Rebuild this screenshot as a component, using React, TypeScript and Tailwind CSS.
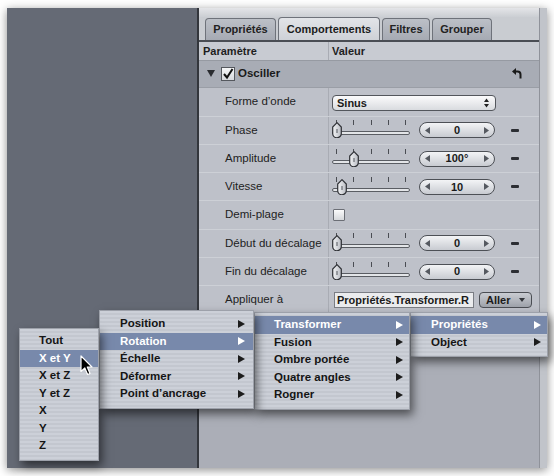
import React from "react";

type Item = { label: string; arrow?: boolean; active?: boolean };

function Tri({ white }: { white?: boolean }) {
  return (
    <svg width="7" height="8" viewBox="0 0 7 8">
      <path d="M0 0L7 4L0 8Z" fill={white ? "#ffffff" : "#1c1c1c"} />
    </svg>
  );
}

function Menu({ items, box, item }: { items: Item[]; box: string; item: string }) {
  return (
    <div
      className={`absolute ${box} pt-[3px] pb-[5px] border border-[#9da1aa] bg-[repeating-linear-gradient(180deg,#ccd0d8_0px,#ccd0d8_2px,#c3c7cf_2px,#c3c7cf_4px)] shadow-[3px_5px_9px_rgba(0,0,0,0.55)]`}
    >
      {items.map((it) => (
        <div
          key={it.label}
          className={`h-[17.5px] flex items-center justify-between text-[11.5px] font-bold ${item} ${
            it.active ? "bg-[#7889ab] text-white" : "text-[#151515]"
          }`}
        >
          <span>{it.label}</span>
          {it.arrow ? <Tri white={it.active} /> : null}
        </div>
      ))}
    </div>
  );
}

function Thumb() {
  return (
    <svg width="10" height="16" viewBox="0 0 10 16">
      <defs>
        <linearGradient id="tg" x1="0" x2="1" y1="0" y2="0">
          <stop offset="0" stopColor="#f4f5f7" />
          <stop offset="1" stopColor="#b9bcc3" />
        </linearGradient>
      </defs>
      <path d="M5 0.7 L9.3 5 V11.5 A4.3 4.3 0 0 1 0.7 11.5 V5 Z" fill="url(#tg)" stroke="#2e3035" strokeWidth="1.2" />
      <path d="M5 7 V11" stroke="#55585e" strokeWidth="1" />
    </svg>
  );
}

const ticks = [4, 21, 39, 56, 73];

function Slider({ pos }: { pos: number }) {
  return (
    <div className="relative w-[78px] h-[28px] shrink-0">
      {ticks.map((t) => (
        <div key={t} className="absolute top-[4px] w-[1px] h-[5px] bg-[#4a4d53]" style={{ left: t }} />
      ))}
      <div className="absolute left-0 right-0 top-[15px] h-[4px] rounded-full border border-[#5a5d63] bg-[#e3e5e8]" />
      <div className="absolute top-[6px]" style={{ left: pos - 5 }}>
        <Thumb />
      </div>
    </div>
  );
}

function Stepper({ value }: { value: string }) {
  return (
    <div className="ml-[9px] w-[76px] h-[16px] rounded-full border border-[#4d5056] bg-[linear-gradient(180deg,#f3f4f6,#c8cbd1)] flex items-center justify-between px-[5px] shrink-0">
      <svg width="5" height="7" viewBox="0 0 5 7">
        <path d="M5 0L0 3.5L5 7Z" fill="#555960" />
      </svg>
      <span className="text-[11px] font-bold text-[#1a1a1a]">{value}</span>
      <svg width="5" height="7" viewBox="0 0 5 7">
        <path d="M0 0L5 3.5L0 7Z" fill="#555960" />
      </svg>
    </div>
  );
}

function Minus() {
  return <div className="ml-[16px] w-[8px] h-[3px] rounded-[1px] bg-[#2c2e33] shrink-0" />;
}

function Row({ label, children }: { label: string; children?: React.ReactNode }) {
  return (
    <div className="h-[28.3px] flex border-b border-[#cdd0d6] bg-[#bec1c9]">
      <div className="w-[130px] shrink-0 pl-[26px] flex items-center text-[11.5px] text-[#222222] border-r border-[#a9acb4]">
        {label}
      </div>
      <div className="flex-1 pl-[3px] flex items-center">{children}</div>
    </div>
  );
}

function SliderRow({ label, pos, value }: { label: string; pos: number; value: string }) {
  return (
    <Row label={label}>
      <Slider pos={pos} />
      <Stepper value={value} />
      <Minus />
    </Row>
  );
}

export default function App() {
  return (
    <div className="relative w-[554px] h-[476px] bg-white overflow-hidden font-['Liberation_Sans',Arial,sans-serif]">
      <div className="ml-[7px] pt-[8px]">
        <div className="w-[540px] h-[460px] flex shadow-[0_2px_9px_rgba(0,0,0,0.45)]">
          <div className="w-[190px] bg-[#656a75]" />
          <div className="w-[2px] bg-[#33363c]" />
          <div className="w-[348px] flex bg-[#abaeb7]">
            <div className="w-[340px] flex flex-col">
              <div className="h-[9px] bg-[linear-gradient(180deg,#e4e5e8,#cbced3)]" />
              <div className="h-[23px] flex items-end pl-[6px] gap-[2px] bg-[#c9ccd1]">
                <div className="w-[71px] h-[22px] rounded-t-[4px] border border-b-0 border-[#6e727a] bg-[linear-gradient(180deg,#bcc0c7,#a6aab3)] flex items-center justify-center text-[11px] font-bold text-[#222]">
                  Propriétés
                </div>
                <div className="w-[102px] h-[23px] rounded-t-[4px] border border-b-0 border-[#6e727a] bg-[linear-gradient(180deg,#e2e4e8,#ced1d7)] flex items-center justify-center text-[11px] font-bold text-[#1c1c1c]">
                  Comportements
                </div>
                <div className="w-[48px] h-[22px] rounded-t-[4px] border border-b-0 border-[#6e727a] bg-[linear-gradient(180deg,#bcc0c7,#a6aab3)] flex items-center justify-center text-[11px] font-bold text-[#222]">
                  Filtres
                </div>
                <div className="w-[60px] h-[22px] rounded-t-[4px] border border-b-0 border-[#6e727a] bg-[linear-gradient(180deg,#bcc0c7,#a6aab3)] flex items-center justify-center text-[11px] font-bold text-[#222]">
                  Grouper
                </div>
              </div>
              <div className="h-[2px] bg-[#4a4d54]" />
              <div className="h-[18.7px] flex bg-[#c8cbd2] border-b border-[#969aa2] text-[11px] font-bold text-[#1e1e1e]">
                <div className="w-[130px] pl-[4px] flex items-center border-r border-[#a9acb4]">Paramètre</div>
                <div className="pl-[3px] flex items-center">Valeur</div>
              </div>
              <div className="h-[27.6px] flex items-center justify-between bg-[#a8acb5] border-b border-[#9a9ea6] pr-[17px]">
                <div className="flex items-center">
                  <svg className="ml-[8px]" width="8" height="7" viewBox="0 0 8 7">
                    <path d="M0 0H8L4 7Z" fill="#2a2c30" />
                  </svg>
                  <div className="ml-[6px] w-[14px] h-[14px] border border-[#55585e] bg-[linear-gradient(180deg,#f6f7f8,#d6d8dc)] flex items-center justify-center">
                    <svg width="12" height="12" viewBox="0 0 12 12">
                      <path d="M2 6 L5 9.5 L10.5 1" fill="none" stroke="#111" strokeWidth="2" />
                    </svg>
                  </div>
                  <span className="ml-[3px] text-[11.5px] font-bold text-[#1a1a1a]">Osciller</span>
                </div>
                <svg width="10" height="11" viewBox="0 0 10 11">
                  <path d="M3.5 3.5 H5.5 A3 3 0 0 1 8.5 6.5 V10.5" fill="none" stroke="#1a1a1a" strokeWidth="2" />
                  <path d="M0 3.5 L4 0 L4 7 Z" fill="#1a1a1a" />
                </svg>
              </div>
              <Row label="Forme d’onde">
                <div className="mt-[3px] w-[164px] h-[16px] rounded-[4px] border border-[#53565c] bg-[linear-gradient(180deg,#fbfbfc,#d9dbdf)] flex items-center justify-between pl-[4px] pr-[6px]">
                  <span className="text-[11px] font-bold text-[#1a1a1a]">Sinus</span>
                  <svg width="5" height="10" viewBox="0 0 5 10">
                    <path d="M0 4L2.5 0.5L5 4Z M0 6L2.5 9.5L5 6Z" fill="#222" />
                  </svg>
                </div>
              </Row>
              <SliderRow label="Phase" pos={4.5} value="0" />
              <SliderRow label="Amplitude" pos={22} value="100°" />
              <SliderRow label="Vitesse" pos={10} value="10" />
              <Row label="Demi-plage">
                <div className="ml-[1px] w-[12px] h-[12px] rounded-[1px] border border-[#6b6e75] bg-[linear-gradient(180deg,#fafafb,#d5d7db)]" />
              </Row>
              <SliderRow label="Début du décalage" pos={4.5} value="0" />
              <SliderRow label="Fin du décalage" pos={4.5} value="0" />
              <Row label="Appliquer à">
                <div className="ml-[2px] w-[140px] h-[16px] border border-[#7a7d84] bg-[#ebecee] overflow-hidden whitespace-nowrap pl-[2px] flex items-center text-[11px] font-bold text-[#1a1a1a]">
                  Propriétés.Transformer.R
                </div>
                <div className="ml-[5px] w-[53px] h-[16px] rounded-[4px] border border-[#4a4d53] bg-[linear-gradient(180deg,#c9ccd2,#9ea2aa)] flex items-center justify-between pl-[6px] pr-[6px]">
                  <span className="text-[11px] font-bold text-[#1a1a1a]">Aller</span>
                  <svg width="6" height="4" viewBox="0 0 6 4">
                    <path d="M0 0H6L3 4Z" fill="#33363b" />
                  </svg>
                </div>
              </Row>
              <div className="flex-1 bg-[#abaeb7]" />
            </div>
            <div className="w-[8px] border-l border-[#8f929a] bg-[#c1c4ca]" />
          </div>
        </div>
      </div>

      <Menu
        box="left-[410px] top-[312px] w-[138px]"
        item="pl-[20px] pr-[6px]"
        items={[
          { label: "Propriétés", arrow: true, active: true },
          { label: "Object", arrow: true },
        ]}
      />
      <Menu
        box="left-[254px] top-[312px] w-[156px]"
        item="pl-[19px] pr-[6px]"
        items={[
          { label: "Transformer", arrow: true, active: true },
          { label: "Fusion", arrow: true },
          { label: "Ombre portée", arrow: true },
          { label: "Quatre angles", arrow: true },
          { label: "Rogner", arrow: true },
        ]}
      />
      <Menu
        box="left-[99px] top-[310px] w-[155px] pt-[4px]"
        item="pl-[20px] pr-[8px]"
        items={[
          { label: "Position", arrow: true },
          { label: "Rotation", arrow: true, active: true },
          { label: "Échelle", arrow: true },
          { label: "Déformer", arrow: true },
          { label: "Point d’ancrage", arrow: true },
        ]}
      />
      <Menu
        box="left-[19px] top-[328px] w-[80px]"
        item="pl-[19px] pr-[4px]"
        items={[
          { label: "Tout" },
          { label: "X et Y", active: true },
          { label: "X et Z" },
          { label: "Y et Z" },
          { label: "X" },
          { label: "Y" },
          { label: "Z" },
        ]}
      />
      <svg className="absolute left-[80px] top-[355px]" width="13" height="21" viewBox="0 0 13 21">
        <path d="M1 1 L1 16.5 L4.8 13 L7.6 19.5 L10 18.5 L7.3 12 L12 12 Z" fill="#000" stroke="#fff" strokeWidth="1.2" strokeLinejoin="round" />
      </svg>
    </div>
  );
}
